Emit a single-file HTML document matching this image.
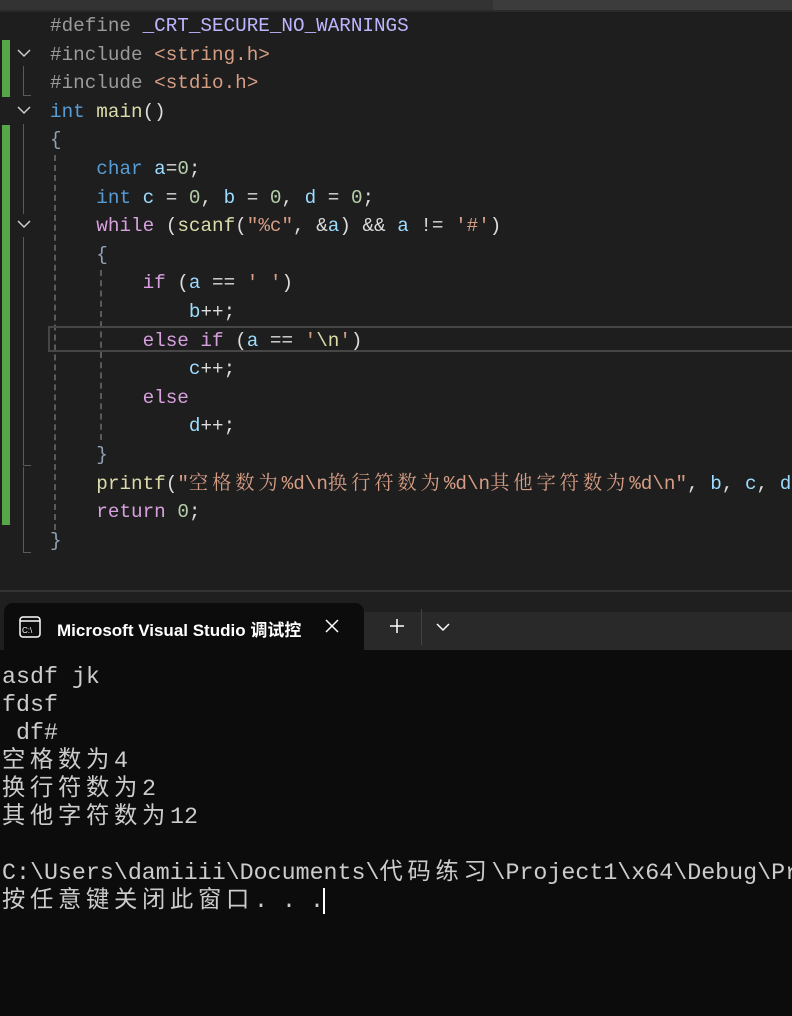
<!DOCTYPE html>
<html><head><meta charset="utf-8"><style>
*{margin:0;padding:0;box-sizing:border-box}
html,body{width:792px;height:1016px;overflow:hidden}
body{background:#1e1e1e;position:relative;font-family:"Liberation Mono","Noto Serif CJK SC",monospace}
.top{position:absolute;left:0;top:0;width:792px;height:10px;background:#333}
.top2{position:absolute;left:493px;top:0;width:299px;height:10px;background:#3c3c3c}
.top3{position:absolute;left:0;top:10px;width:792px;height:2px;background:#2a2a2a}
.code{position:absolute;left:50px;top:12px;font-size:19.3px;color:#dcdcdc}
.l{height:28.6px;line-height:28.6px;white-space:pre}
.c{letter-spacing:3.9px;font-family:"Noto Serif CJK SC","Noto Sans CJK SC",serif;font-size:19.3px;line-height:0}
.pp{color:#9b9b9b}.mac{color:#bdb6ff}.st{color:#d69d85}.kw{color:#569cd6}.fn{color:#dcdcaa}.v{color:#9cdcfe}.n{color:#b5cea8}.ct{color:#d8a0df}.br{color:#8fa1b3}
.g{position:absolute;left:2px;width:8px;background:#57a64a}
.fl{position:absolute;left:23px;width:1px;background:#5a5a5a}
.dash{position:absolute;width:0;border-left:2px dashed #5a5a5a}
.chev{position:absolute;left:17px;width:14px;height:10px}
.term{position:absolute;left:0;top:590px;width:792px;height:426px;background:#0c0c0c}
.tbar{position:absolute;left:0;top:590px;width:792px;height:60px;background:#1f1f1f;border-top:2px solid #333}
.tbar2{position:absolute;left:360px;top:612px;width:432px;height:38px;background:#292929}
.tab{position:absolute;left:4px;top:603px;width:360px;height:47px;background:#0c0c0c;border-radius:9px 9px 0 0}
.tt{position:absolute;left:57px;top:616px;color:#fff;font:600 17px "Liberation Sans","Noto Sans CJK SC",sans-serif}
.out{position:absolute;left:2px;top:663px;color:#cccccc;font-size:23.3px;font-family:"Liberation Mono","Noto Sans CJK SC",monospace}
.o{height:28px;line-height:28px;white-space:pre}
.k{font-family:"Noto Sans CJK SC",sans-serif;letter-spacing:4.7px;line-height:0}
</style></head><body>
<div class="top"></div><div class="top2"></div><div class="top3"></div>
<div class="g" style="top:40px;height:57px"></div>
<div class="g" style="top:125px;height:400px"></div>
<svg class="chev" style="top:48px" viewBox="0 0 14 10"><path d="M1 2l6 6 6-6" stroke="#ccc" stroke-width="1.5" fill="none"/></svg>
<svg class="chev" style="top:105px" viewBox="0 0 14 10"><path d="M1 2l6 6 6-6" stroke="#ccc" stroke-width="1.5" fill="none"/></svg>
<svg class="chev" style="top:219px" viewBox="0 0 14 10"><path d="M1 2l6 6 6-6" stroke="#ccc" stroke-width="1.5" fill="none"/></svg>
<div class="fl" style="top:66px;height:30px"></div><div style="position:absolute;left:23px;top:95px;width:8px;height:1px;background:#5a5a5a"></div>
<div class="fl" style="top:124px;height:90px"></div>
<div class="fl" style="top:237px;height:228px"></div><div style="position:absolute;left:23px;top:465px;width:8px;height:1px;background:#5a5a5a"></div>
<div class="fl" style="top:467px;height:85px"></div><div style="position:absolute;left:23px;top:552px;width:8px;height:1px;background:#5a5a5a"></div>
<div class="dash" style="left:54px;top:155px;height:375px"></div>
<div class="dash" style="left:100px;top:270px;height:170px"></div>
<div style="position:absolute;left:48px;top:326px;width:760px;height:26px;border:2px solid #464646"></div>
<div class="code"><div class="l"><span class="pp">#define </span><span class="mac">_CRT_SECURE_NO_WARNINGS</span></div><div class="l"><span class="pp">#include </span><span class="st">&lt;string.h&gt;</span></div><div class="l"><span class="pp">#include </span><span class="st">&lt;stdio.h&gt;</span></div><div class="l"><span class="kw">int</span> <span class="fn">main</span>()</div><div class="l"><span class="br">{</span></div><div class="l">    <span class="kw">char</span> <span class="v">a</span>=<span class="n">0</span>;</div><div class="l">    <span class="kw">int</span> <span class="v">c</span> = <span class="n">0</span>, <span class="v">b</span> = <span class="n">0</span>, <span class="v">d</span> = <span class="n">0</span>;</div><div class="l">    <span class="ct">while</span> (<span class="fn">scanf</span>(<span class="st">"%c"</span>, &amp;<span class="v">a</span>) &amp;&amp; <span class="v">a</span> != <span class="st">'#'</span>)</div><div class="l">    <span class="br">{</span></div><div class="l">        <span class="ct">if</span> (<span class="v">a</span> == <span class="st">' '</span>)</div><div class="l">            <span class="v">b</span>++;</div><div class="l">        <span class="ct">else if</span> (<span class="v">a</span> == <span class="st">'</span><span class="fn">\n</span><span class="st">'</span>)</div><div class="l">            <span class="v">c</span>++;</div><div class="l">        <span class="ct">else</span></div><div class="l">            <span class="v">d</span>++;</div><div class="l">    <span class="br">}</span></div><div class="l">    <span class="fn">printf</span>(<span class="st">"<span class="c">空格数为</span>%d\n<span class="c">换行符数为</span>%d\n<span class="c">其他字符数为</span>%d\n"</span>, <span class="v">b</span>, <span class="v">c</span>, <span class="v">d</span></div><div class="l">    <span class="ct">return</span> <span class="n">0</span>;</div><div class="l"><span class="br">}</span></div></div>
<div class="term"></div>
<div class="tbar"></div><div class="tbar2"></div>
<div class="tab"></div>
<svg style="position:absolute;left:19px;top:616px" width="22" height="22" viewBox="0 0 22 22"><rect x="1" y="1" width="20" height="20" rx="3" fill="none" stroke="#fff" stroke-width="1.5"/><line x1="1" y1="5" x2="21" y2="5" stroke="#fff" stroke-width="1.5"/><text x="3" y="17" fill="#fff" font-size="8" font-family="Liberation Sans">C:\</text></svg>
<div class="tt">Microsoft Visual Studio 调试控</div>
<svg style="position:absolute;left:325px;top:619px" width="14" height="14"><path d="M1 1l12 12M13 1L1 13" stroke="#fff" stroke-width="1.5"/></svg>
<svg style="position:absolute;left:389px;top:618px" width="16" height="16"><path d="M8 1v14M1 8h14" stroke="#fff" stroke-width="1.5"/></svg>
<div style="position:absolute;left:421px;top:609px;width:1px;height:36px;background:#444"></div>
<svg style="position:absolute;left:436px;top:622px" width="14" height="10"><path d="M1 2l6 6 6-6" stroke="#fff" stroke-width="1.5" fill="none"/></svg>
<div class="out"><div class="o">asdf jk</div><div class="o">fdsf</div><div class="o"> df#</div><div class="o"><span class="k">空格数为</span>4</div><div class="o"><span class="k">换行符数为</span>2</div><div class="o"><span class="k">其他字符数为</span>12</div><div class="o"> </div><div class="o">C:\Users\damiiii\Documents\<span class="k">代码练习</span>\Project1\x64\Debug\Pr</div><div class="o"><span class="k">按任意键关闭此窗口</span><span style="letter-spacing:14px">...</span></div></div>
<div style="position:absolute;left:323px;top:888px;width:2px;height:26px;background:#fff"></div>
</body></html>
